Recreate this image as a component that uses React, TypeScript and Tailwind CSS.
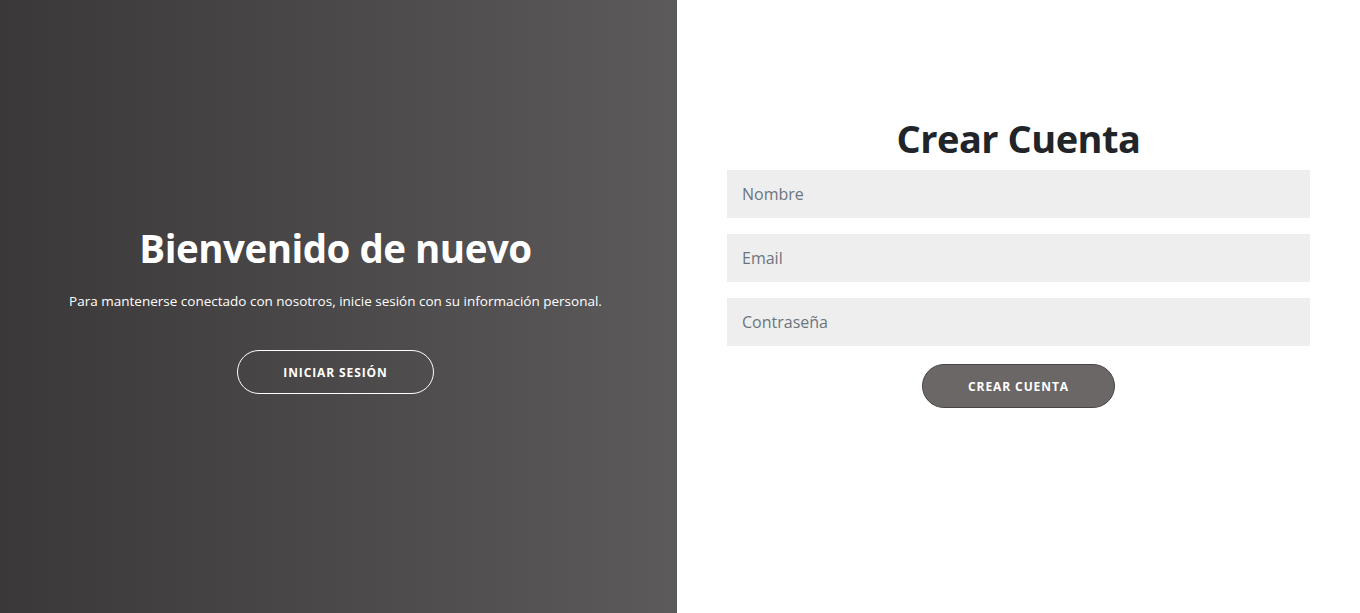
import React from "react";

export default function App() {
  const font = { fontFamily: '"Open Sans", "Noto Sans", sans-serif' };
  return (
    <div className="flex h-[613px] w-full overflow-hidden bg-white" style={font}>
      <div className="flex w-[677px] shrink-0 flex-col items-center justify-center bg-gradient-to-r from-[#3a3838] to-[#5c5a5a] pr-[6px] text-white">
        <h1 className="mt-[4px] text-[38.5px] font-bold leading-[48px] tracking-[-0.5px]">Bienvenido de nuevo</h1>
        <p className="mt-[19px] text-[13.5px] leading-[20px]">
          Para mantenerse conectado con nosotros, inicie sesión con su información personal.
        </p>
        <button className="mt-[39px] h-[44px] w-[197px] rounded-full border border-white pt-[2px] text-[12px] font-bold tracking-[0.9px]">
          INICIAR SESIÓN
        </button>
      </div>
      <div className="flex flex-1 flex-col items-center px-[50px] pt-[112px]">
        <h1 className="text-[38px] font-bold leading-[52px] tracking-[-0.5px] text-[#212529]">Crear Cuenta</h1>
        <div className="mt-[6px] flex w-full flex-col gap-[16px]">
          <input
            className="h-[48px] w-full bg-[#eeeeee] px-[15px] text-[16px] text-[#212529] placeholder-[#6c757d] outline-none"
            placeholder="Nombre"
          />
          <input
            className="h-[48px] w-full bg-[#eeeeee] px-[15px] text-[16px] text-[#212529] placeholder-[#6c757d] outline-none"
            placeholder="Email"
          />
          <input
            type="password"
            className="h-[48px] w-full bg-[#eeeeee] px-[15px] text-[16px] text-[#212529] placeholder-[#6c757d] outline-none"
            placeholder="Contraseña"
          />
        </div>
        <button className="mt-[18px] h-[44px] w-[193px] rounded-full border border-[#4a4646] bg-[#6b6766] pt-[2px] text-[12px] font-bold tracking-[0.9px] text-white">
          CREAR CUENTA
        </button>
      </div>
    </div>
  );
}
